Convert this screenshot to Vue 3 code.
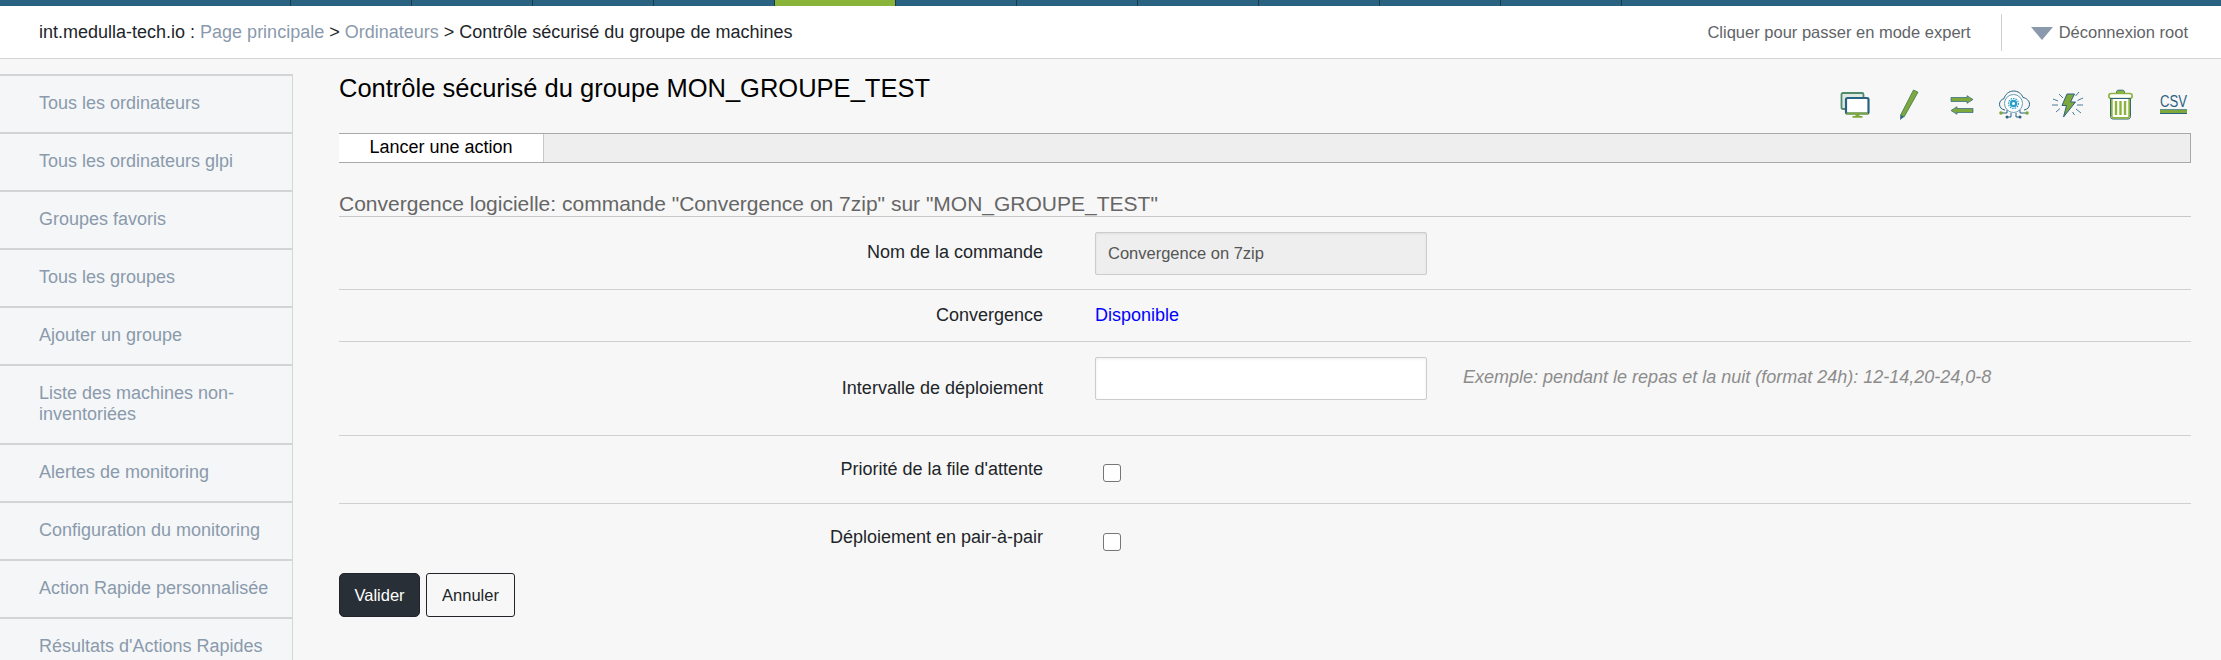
<script setup>
const menu = [
  'Tous les ordinateurs',
  'Tous les ordinateurs glpi',
  'Groupes favoris',
  'Tous les groupes',
  'Ajouter un groupe',
  'Liste des machines non-inventoriées',
  'Alertes de monitoring',
  'Configuration du monitoring',
  'Action Rapide personnalisée',
  "Résultats d'Actions Rapides"
]
const tabs = Array.from({ length: 11 }, (_, i) => i === 4)
</script>

<template>
  <div class="page">
    <div class="topbar">
      <div class="seg first"></div>
      <div v-for="(on, i) in tabs" :key="i" class="seg" :class="{ on }"></div>
      <div class="seg rest"></div>
    </div>
    <header class="head">
      <div class="crumbs">
        int.medulla-tech.io : <a>Page principale</a> &gt; <a>Ordinateurs</a> &gt; Contrôle sécurisé du groupe de machines
      </div>
      <div class="expert">Cliquer pour passer en mode expert</div>
      <div class="logout"><span class="tri"></span>Déconnexion root</div>
    </header>
    <div class="body">
      <nav class="side">
        <a v-for="m in menu" :key="m" class="item">{{ m }}</a>
      </nav>
      <main class="main">
        <h2 class="title">Contrôle sécurisé du groupe MON_GROUPE_TEST</h2>
        <div class="icons">
          <svg viewBox="0 0 33 33" class="ic">
            <rect x="2.500" y="4" width="22" height="16" rx="1.500" fill="#dfe9e2" stroke="#4f8a6a" stroke-width="1.800"/>
            <rect x="7" y="9" width="22.500" height="15.500" rx="1.500" fill="#fff" stroke="#2a6382" stroke-width="2.200"/>
            <path d="M7.500 23.500h21.500v2H7.500zM16.500 25h4v2.500h-4zM13.500 27h10v1.700h-10z" fill="#7fa83c"/>
          </svg>
          <svg viewBox="0 0 33 33" class="ic">
            <path d="M21.500 1l4.500 2.200L12 28l-3.500-1.700z" fill="#7fa83c" stroke="#4f8a5a" stroke-width="1"/>
            <path d="M8.500 26l3.500 1.800L8 31z" fill="#2a6382"/>
          </svg>
          <svg viewBox="0 0 33 33" class="ic">
            <path d="M6 8.500h16V6.700l6 3.800-6 3.800v-1.800H6z" fill="#7fa83c" stroke="#2a6382" stroke-width=".7"/>
            <path d="M28 19.500H12v-1.800l-6 3.800 6 3.800v-1.800h16z" fill="#7fa83c" stroke="#2a6382" stroke-width=".7"/>
          </svg>
          <svg viewBox="0 0 33 33" class="ic">
            <path d="M7 21c-3.500-.4-5.500-2.800-5.500-5.800 0-2.800 2-5 4.500-5.500C7 5.500 11 2 15.500 2c4.500 0 8 2.500 9.500 6.500 3.500.6 6.500 3.300 6.500 6.700 0 3-2 5.300-5.500 5.800" fill="none" stroke="#2a6382" stroke-width="1"/>
            <circle cx="15.500" cy="14.500" r="9" fill="#fff" stroke="#6e9db5" stroke-width="1"/>
            <circle cx="15.500" cy="14.500" r="5" fill="none" stroke="#2a9fc9" stroke-width="1.200" stroke-dasharray="1.500 1"/>
            <circle cx="15.500" cy="14.500" r="3.800" fill="#2a9fc9"/>
            <circle cx="15.500" cy="14.500" r="1.500" fill="#fff"/>
            <path d="M4 24h5v-3M28 24h-6v-3M9 28h4v-4M22 28h-4v-4" fill="none" stroke="#2a6382" stroke-width="1"/>
            <circle cx="3" cy="24" r="1.800" fill="#7fa83c"/>
            <circle cx="29" cy="24" r="1.800" fill="#7fa83c"/>
            <circle cx="9" cy="28" r="1.500" fill="#2a6382"/>
            <circle cx="22" cy="28" r="1.500" fill="#2a6382"/>
          </svg>
          <svg viewBox="0 0 33 33" class="ic">
            <path d="M16 5h7.500l-4 8h5L12.500 28l3-11.500h-4.500z" fill="#7fa83c" stroke="#2a6382" stroke-width="1"/>
            <path d="M8 5l4 4M2 10l5 2M1 16h6M5 23l4-3.500M28 3l-3.500 4M32 9l-5.500 2.500M32 16h-6M30 24l-5-4M21.500 23l2 3" fill="none" stroke="#4a7d99" stroke-width="1"/>
          </svg>
          <svg viewBox="0 0 33 33" class="ic">
            <path d="M12.500 4.500V3c0-1 .8-1.800 1.800-1.800h4.400c1 0 1.800.8 1.800 1.800v1.500" fill="#8cb43c" stroke="#2a6382" stroke-width=".9"/>
            <rect x="4.800" y="4.500" width="23.400" height="5" rx="2.400" fill="#fff" stroke="#8cb43c" stroke-width="1.600"/>
            <path d="M6.500 9.500h20v18c0 1.500-1 2.500-2.500 2.500H9c-1.500 0-2.500-1-2.500-2.500z" fill="#fff" stroke="#2a6382" stroke-width="1"/>
            <path d="M7.800 10v17.300c0 1 .6 1.500 1.500 1.500h14.400c.9 0 1.500-.5 1.500-1.500V10" fill="none" stroke="#8cb43c" stroke-width="1.800"/>
            <path d="M12 12v14M16.500 12v14M21 12v14" stroke="#8cb43c" stroke-width="2.400"/>
          </svg>
          <div class="csv">
            <span>CSV</span>
            <i></i>
          </div>
        </div>
        <div class="tabbar"><div class="tab">Lancer une action</div></div>
        <h3 class="sub">Convergence logicielle: commande "Convergence on 7zip" sur "MON_GROUPE_TEST"</h3>
        <form class="form" @submit.prevent>
          <div class="row r1">
            <label>Nom de la commande</label>
            <div class="ctl"><input class="txt dis" value="Convergence on 7zip" disabled /></div>
          </div>
          <div class="row r2">
            <label>Convergence</label>
            <div class="ctl"><span class="blue">Disponible</span></div>
          </div>
          <div class="row r3">
            <label>Intervalle de déploiement</label>
            <div class="ctl"><input class="txt" /><em class="hint">Exemple: pendant le repas et la nuit (format 24h): 12-14,20-24,0-8</em></div>
          </div>
          <div class="row r4">
            <label>Priorité de la file d'attente</label>
            <div class="ctl"><span class="chk"></span></div>
          </div>
          <div class="row r5">
            <label>Déploiement en pair-à-pair</label>
            <div class="ctl"><span class="chk"></span></div>
          </div>
          <div class="btns">
            <button class="btn dark">Valider</button>
            <button class="btn">Annuler</button>
          </div>
        </form>
      </main>
    </div>
  </div>
</template>

<style>
html, body { margin: 0; background: #f7f7f7; }
</style>

<style scoped>
.page {
  width: 2221px;
  height: 660px;
  overflow: hidden;
  background: #f7f7f7;
  font-family: "Liberation Sans", Arial, sans-serif;
  font-size: 18px;
  color: #212529;
}
.topbar { display: flex; height: 6px; background: #2a6382; }
.seg { width: 120px; height: 6px; border-right: 1px solid #1c3a4c; flex: none; }
.seg.first { width: 290px; }
.seg.on { background: #8ab33a; }
.seg.rest { flex: 1; border: 0; }
.head {
  display: flex;
  align-items: center;
  height: 52px;
  background: #fff;
  border-bottom: 1px solid #d4d4d4;
  padding: 0 33px 0 39px;
  margin-bottom: 15px;
}
.crumbs { flex: 1; margin-top: 1px; }
.crumbs a { color: #8a9aac; }
.expert { color: #5f6468; font-size: 16.500px; padding-right: 30px; line-height: 37px; }
.logout {
  display: flex;
  align-items: center;
  height: 37px;
  border-left: 1px solid #d0d0d0;
  padding-left: 29px;
  color: #5f6468;
  font-size: 16.500px;
}
.tri {
  width: 0; height: 0;
  border-left: 11px solid transparent;
  border-right: 11px solid transparent;
  border-top: 13px solid #8a9aac;
  margin-right: 6px;
  margin-top: 3px;
}
.body { display: flex; }
.side {
  width: 292px;
  flex: none;
  background: #f5f6f7;
  border-right: 1px solid #d4d6d8;
}
.item {
  display: block;
  border-top: 2px solid #d2d4d6;
  padding: 17px 12px 18px 39px;
  line-height: 21px;
  color: #8a9aac;
}
.main { flex: 1; padding: 0 30px 0 46px; min-width: 0; }
.title {
  margin: 0;
  font-size: 25.500px;
  font-weight: 400;
  line-height: 28px;
  color: #000;
}
.icons {
  display: flex;
  justify-content: flex-end;
  gap: 20px;
  height: 32px;
  margin-top: -13px;
  padding-right: 1px;
}
.ic { width: 33px; height: 33px; flex: none; }
.csv { width: 33px; display: flex; flex-direction: column; align-items: center; color: #2a6382; font-size: 16px; line-height: 14px; padding-top: 6px; box-sizing: border-box; }
.csv span { display: block; transform: scaleX(.82); }
.csv i { display: block; flex: none; width: 27px; height: 5px; background: #7fa83c; border-bottom: 1px solid #2a6382; border-top: 1px solid #5f8f8f; box-sizing: border-box; }
.tabbar {
  height: 30px;
  margin-top: 12px;
  box-sizing: border-box;
  background: #eee;
  border: 1px solid #a8a8a8;
  border-left: 0;
  display: flex;
}
.tab {
  width: 204px;
  margin-bottom: -1px;
  background: #fff;
  border-right: 1px solid #c8c8c8;
  color: #000;
  text-align: center;
  line-height: 27px;
  height: 28px;
}
.sub {
  margin: 31px 0 0;
  font-size: 21px;
  font-weight: 400;
  line-height: 20px;
  padding-bottom: 2px;
  color: #666;
  border-bottom: 1px solid #c8c8c8;
}
.row {
  display: grid;
  grid-template-columns: 704px 1fr;
  column-gap: 52px;
  border-bottom: 1px solid #d0d0d0;
  box-sizing: border-box;
}
.row label { text-align: right; color: #212529; line-height: 20px; }
.ctl { display: flex; align-items: flex-start; }
.r1 { height: 73px; padding-top: 15px; }
.r1 label { padding-top: 10px; }
.r2 { height: 52px; }
.r2 label { padding-top: 15px; }
.r2 .blue { color: #00f; line-height: 20px; padding-top: 15px; }
.r3 { height: 94px; padding-top: 15px; }
.r3 label { padding-top: 21px; }
.r4 { height: 68px; padding-top: 23px; }
.r5 { height: 68px; padding-top: 23px; border-bottom: 0; }
.txt {
  width: 332px;
  height: 43px;
  box-sizing: border-box;
  border: 1px solid #ccc;
  border-radius: 2px;
  background: #fff;
  box-shadow: inset 0 1px 3px #eee;
  padding: 0 12px;
  font: 16.500px "Liberation Sans", Arial, sans-serif;
  color: #555;
  outline: 0;
}
.txt.dis { background: #eee; box-shadow: inset 0 1px 2px #ddd; opacity: 1; }
.hint {
  margin-left: 36px;
  margin-top: 10px;
  font-size: 18px;
  line-height: 20px;
  color: #8c8c8c;
}
.chk {
  display: block;
  width: 18px;
  height: 18px;
  margin: 5px 0 0 8px;
  box-sizing: border-box;
  border: 1px solid #767676;
  border-radius: 3px;
  background: #fff;
}
.r5 .chk { margin-top: 6px; }
.btns { display: flex; gap: 6px; margin-top: 1px; }
.btn {
  height: 44px;
  width: 89px;
  box-sizing: border-box;
  border: 1px solid #212529;
  border-radius: 3px;
  background: transparent;
  font: 16.500px "Liberation Sans", Arial, sans-serif;
  color: #212529;
}
.btn.dark { width: 81px; background: #292f36; color: #fff; border-radius: 5px; }
</style>
